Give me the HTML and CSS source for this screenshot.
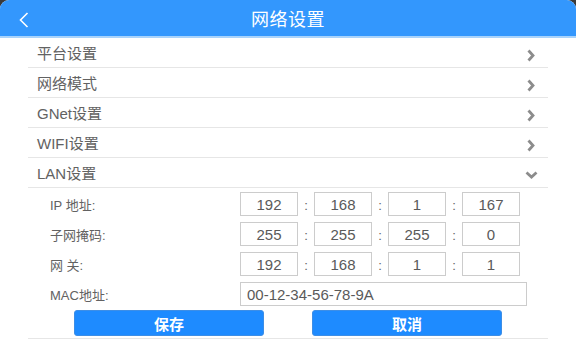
FILE: index.html
```html
<!DOCTYPE html>
<html lang="zh-CN">

<head>
  <meta charset="UTF-8">
  <meta name="viewport" content="width=device-width, initial-scale=1.0">
  <title>网络设置</title>

  <link rel="stylesheet" href="styles.css">
</head>

<body>
  <div class="app">
    <div class="header">
      <span class="back">
        <svg width="10" height="16" viewBox="0 0 10 16">
          <polyline points="8.5,1 1.5,8 8.5,15" fill="none" stroke="#ffffff" stroke-width="1.6" />
        </svg>
      </span>
      <span class="title">网络设置</span>
    </div>

    <div class="menu">
      <div class="menu_item">
        <span>平台设置</span>
        <svg class="arrow" width="8" height="13" viewBox="0 0 8 13">
          <polyline points="1.5,1.5 6,6.5 1.5,11.5" fill="none" stroke="#8c8c8c" stroke-width="2.8" />
        </svg>
      </div>
      <div class="menu_item">
        <span>网络模式</span>
        <svg class="arrow" width="8" height="13" viewBox="0 0 8 13">
          <polyline points="1.5,1.5 6,6.5 1.5,11.5" fill="none" stroke="#8c8c8c" stroke-width="2.8" />
        </svg>
      </div>
      <div class="menu_item">
        <span>GNet设置</span>
        <svg class="arrow" width="8" height="13" viewBox="0 0 8 13">
          <polyline points="1.5,1.5 6,6.5 1.5,11.5" fill="none" stroke="#8c8c8c" stroke-width="2.8" />
        </svg>
      </div>
      <div class="menu_item">
        <span>WIFI设置</span>
        <svg class="arrow" width="8" height="13" viewBox="0 0 8 13">
          <polyline points="1.5,1.5 6,6.5 1.5,11.5" fill="none" stroke="#8c8c8c" stroke-width="2.8" />
        </svg>
      </div>
      <div class="menu_item">
        <span>LAN设置</span>
        <svg class="arrow arrow_down" width="13" height="8" viewBox="0 0 13 8">
          <polyline points="1.5,1.5 6.5,6 11.5,1.5" fill="none" stroke="#8c8c8c" stroke-width="2.8" />
        </svg>
      </div>

      <div class="lan_panel">
        <div class="field">
          <span class="field_label">IP 地址:</span>
          <div class="ip_group">
            <input class="ip_box" type="text" value="192">
            <span class="dot">:</span>
            <input class="ip_box" type="text" value="168">
            <span class="dot">:</span>
            <input class="ip_box" type="text" value="1">
            <span class="dot">:</span>
            <input class="ip_box" type="text" value="167">
          </div>
        </div>
        <div class="field">
          <span class="field_label">子网掩码:</span>
          <div class="ip_group">
            <input class="ip_box" type="text" value="255">
            <span class="dot">:</span>
            <input class="ip_box" type="text" value="255">
            <span class="dot">:</span>
            <input class="ip_box" type="text" value="255">
            <span class="dot">:</span>
            <input class="ip_box" type="text" value="0">
          </div>
        </div>
        <div class="field">
          <span class="field_label">网 关:</span>
          <div class="ip_group">
            <input class="ip_box" type="text" value="192">
            <span class="dot">:</span>
            <input class="ip_box" type="text" value="168">
            <span class="dot">:</span>
            <input class="ip_box" type="text" value="1">
            <span class="dot">:</span>
            <input class="ip_box" type="text" value="1">
          </div>
        </div>
        <div class="field">
          <span class="field_label">MAC地址:</span>
          <input class="mac_box" type="text" value="00-12-34-56-78-9A">
        </div>
        <div class="actions">
          <button class="btn">保存</button>
          <button class="btn">取消</button>
        </div>
      </div>
    </div>
  </div>
</body>

</html>
```

FILE: styles.css
```css
* {
  box-sizing: border-box;
  margin: 0;
  padding: 0;
}

body {
  background-color: #3a3a3a;
  font-family: "Liberation Sans", "Noto Sans CJK SC", sans-serif;
  height: 100vh;
  overflow: hidden;
  width: 100vw;
}

.app {
  background-color: #ffffff;
  border-radius: 9px 9px 0 0;
  height: 100%;
  overflow: hidden;
}

.header {
  align-items: center;
  background-color: #3397fd;
  border-bottom: 2px solid #a9d3fb;
  display: flex;
  height: 38px;
  justify-content: center;
  position: relative;
}

.back {
  display: flex;
  left: 19px;
  position: absolute;
  top: 12px;
}

.title {
  color: #ffffff;
  font-size: 18px;
  letter-spacing: 0.5px;
}

.menu {
  margin: 0 28px;
}

.menu_item {
  align-items: center;
  border-bottom: 1px solid #e6e6e6;
  color: #626262;
  display: flex;
  font-size: 15px;
  height: 30px;
  justify-content: space-between;
  padding: 0 13px 0 9px;
}

.arrow {
  margin-top: 6px;
}

.arrow_down {
  margin-right: -3px;
  margin-top: 4px;
}

.lan_panel {
  border-bottom: 1px solid #e6e6e6;
  display: flex;
  flex-direction: column;
  gap: 6px;
  padding: 4px 0 1px;
}

.field {
  align-items: center;
  display: flex;
  height: 24px;
  padding-left: 22px;
}

.field_label {
  color: #626262;
  font-size: 13px;
  width: 190px;
}

.ip_group {
  align-items: center;
  display: flex;
}

.ip_box,
.mac_box {
  border: 1px solid #cccccc;
  color: #5a5a5a;
  font-family: "Liberation Sans", "Noto Sans CJK SC", sans-serif;
  font-size: 15px;
  height: 24px;
  outline: none;
}

.ip_box {
  text-align: center;
  width: 58px;
}

.mac_box {
  padding-left: 6px;
  width: 287px;
}

.dot {
  color: #626262;
  font-size: 13px;
  padding-top: 3px;
  text-align: center;
  width: 16px;
}

.actions {
  display: flex;
  gap: 48px;
  margin-top: -2px;
  padding: 0 0 1px 46px;
}

.btn {
  background-color: #1e8bff;
  border: 1px solid #3d8ee6;
  border-radius: 3px;
  color: #ffffff;
  font-family: "Liberation Sans", "Noto Sans CJK SC", sans-serif;
  font-size: 15px;
  font-weight: bold;
  height: 26px;
  width: 190px;
}
```
